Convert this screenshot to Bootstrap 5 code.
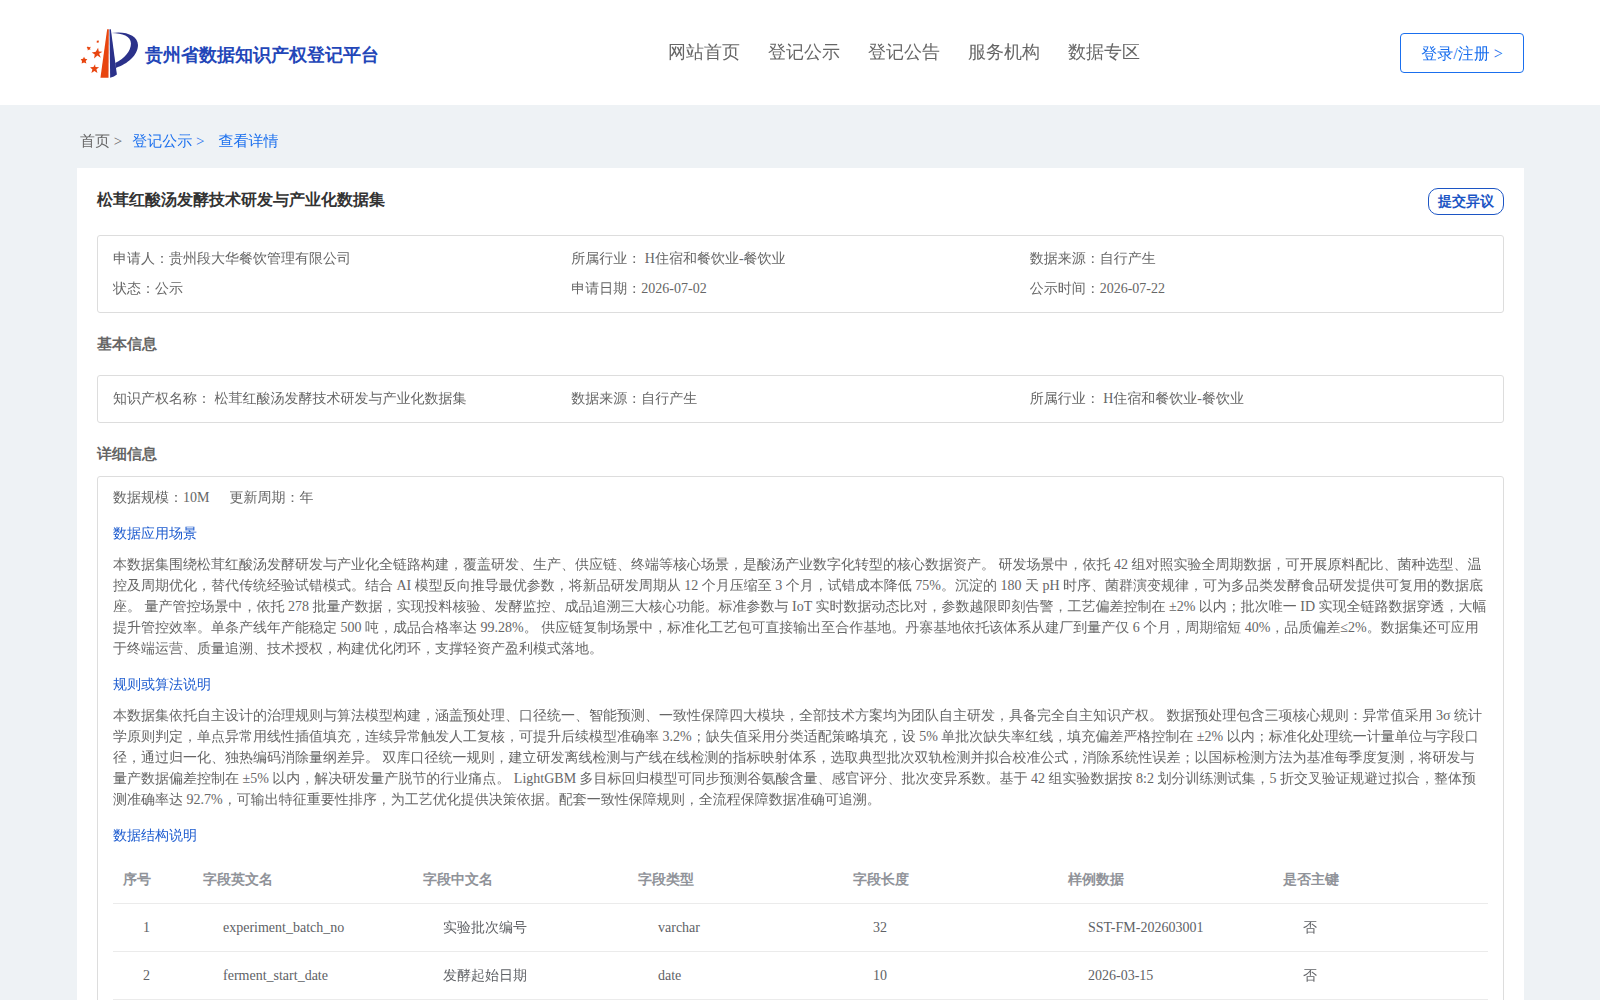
<!DOCTYPE html>
<html lang="en">
<head>
<meta charset="utf-8">
<meta name="viewport" content="width=device-width, initial-scale=1">
<title>贵州省数据知识产权登记平台</title>
<link href="https://cdn.jsdelivr.net/npm/bootstrap@5.3.0/dist/css/bootstrap.min.css" rel="stylesheet">
<style>
  body { font-family: "Liberation Serif", "WenQuanYi Zen Hei", "Noto Sans CJK SC", serif; font-size: 14px; line-height: 21px; color: #666; background: #eef2f5; }
  a { text-decoration: none; }
  .page-pad { padding-left: 77px; padding-right: 76px; }
  .site-header { height: 105px; }
  .brand-name, .sheet-title, .btn-object, .section-title, .field-table th { font-family: "Liberation Serif", serif; font-weight: 700; }
  .brand-name { font-size: 18px; line-height: 26px; color: #2346b8; padding-top: 4px; }
  .brand-link { gap: 6px; padding: 1px 0 0 3px; }
  .main-menu { gap: 28px; font-size: 18px; line-height: 26px; margin-left: 29px; margin-bottom: 2px; }
  .main-menu a { color: #666; }
  .btn-login { height: 40px; padding: 2px 20px 0; min-width: 124px; font-size: 16px; color: #1a6fee; border: 1px solid #1a6fee; border-radius: 4px; }
  .crumbs { height: 63px; padding: 10px 0 0 3px; font-size: 15px; gap: 10px; }
  .crumbs a { color: #1a6fee; }
  .crumbs .crumb-home { color: #666; }
  .crumb-current { color: #1a6fee; padding-left: 4px; }
  .sheet { padding: 20px; }
  .sheet-title { font-size: 16px; line-height: 24px; color: #333; }
  .btn-object { height: 27px; padding: 0 9px; font-size: 14px; line-height: 25px; color: #1c55c4; border: 1px solid #1c55c4; border-radius: 10px; }
  .info-box { border: 1px solid #ddd; border-radius: 3px; padding: 8px 15px; line-height: 30px; }
  .info-box.is-summary { margin-top: 20px; }
  .section-title { font-size: 15px; line-height: 22px; margin: 20px 0; }
  .section-title.is-tight { margin-bottom: 11px; }
  .detail-box { border: 1px solid #ddd; border-radius: 3px; padding: 10px 15px; }
  .sub-title { font-size: 14px; line-height: 21px; font-weight: 400; color: #1c5bcf; margin: 15px 0 10px; }
  .field-table { --bs-table-bg: transparent; table-layout: fixed; color: #606266; margin-top: 10px; }
  .field-table th { padding: 11px 10px 12px; height: 47px; line-height: 23px; color: #909399; border-bottom: 1px solid #ebebeb; }
  .field-table td { padding: 12px 30px; height: 48px; line-height: 23px; color: #606266; border-bottom: 1px solid #ebebeb; }
  .col-index { width: 80px; }
  .col-name { width: 220px; }
</style>
</head>
<body>
<header class="site-header page-pad bg-white d-flex align-items-center justify-content-between">
  <a href="#" class="brand-link d-flex align-items-center">
    <svg width="59" height="51" viewBox="30 38 176 152" aria-hidden="true">
      <path fill="#e8450f" d="M111 42h5l-1 144H91z"/>
      <path fill="#2b318a" d="M118 42h4l18 135q-8 7-20 9z"/>
      <path fill="#2b318a" d="M124 53C165 46 203 60 203 89C203 119 172 146 137 157L135 142C162 129 182 107 182 84C182 63 157 53 124 53Z"/>
      <g fill="#e8450f">
        <path d="M84 97l2 11 11 1-10 6 5 12-10-7-10 9 2-12-9-6 12-2z"/>
        <path d="M75 146l1 8 11 1-8 6 3 11-9-6-9 6 3-10-7-7 10-1z"/>
        <path d="M42 124l3 6 7 1-5 5 2 8-7-3-7 3 1-8-4-5 7-1z"/>
        <path d="M53 93l4 2 5-1-2 5 1 4-4-1-4 3v-5l-3-3z"/>
        <path d="M80 76l6-1v6l-6 1z"/>
      </g>
    </svg>
    <span class="brand-name">贵州省数据知识产权登记平台</span>
  </a>
  <nav class="main-menu d-flex">
    <a href="#">网站首页</a>
    <a href="#">登记公示</a>
    <a href="#">登记公告</a>
    <a href="#">服务机构</a>
    <a href="#">数据专区</a>
  </nav>
  <button type="button" class="btn btn-login">登录/注册 &gt;</button>
</header>

<main class="page-pad">
  <nav class="crumbs d-flex align-items-center" aria-label="breadcrumb">
    <a href="#" class="crumb-home">首页 &gt;</a>
    <a href="#">登记公示 &gt;</a>
    <span class="crumb-current">查看详情</span>
  </nav>

  <div class="sheet bg-white">
    <div class="d-flex justify-content-between align-items-start">
      <h1 class="sheet-title mb-0">松茸红酸汤发酵技术研发与产业化数据集</h1>
      <button type="button" class="btn btn-object">提交异议</button>
    </div>

    <div class="info-box is-summary">
      <div class="row g-0">
        <div class="col-4">申请人：贵州段大华餐饮管理有限公司</div>
        <div class="col-4">所属行业： H住宿和餐饮业-餐饮业</div>
        <div class="col-4">数据来源：自行产生</div>
        <div class="col-4">状态：公示</div>
        <div class="col-4">申请日期：2026-07-02</div>
        <div class="col-4">公示时间：2026-07-22</div>
      </div>
    </div>

    <h2 class="section-title">基本信息</h2>
    <div class="info-box">
      <div class="row g-0">
        <div class="col-4">知识产权名称： 松茸红酸汤发酵技术研发与产业化数据集</div>
        <div class="col-4">数据来源：自行产生</div>
        <div class="col-4">所属行业： H住宿和餐饮业-餐饮业</div>
      </div>
    </div>

    <h2 class="section-title is-tight">详细信息</h2>
    <section class="detail-box">
      <div class="d-flex gap-3"><span class="me-1">数据规模：10M</span><span>更新周期：年</span></div>

      <h3 class="sub-title">数据应用场景</h3>
      <p class="mb-0">本数据集围绕松茸红酸汤发酵研发与产业化全链路构建，覆盖研发、生产、供应链、终端等核心场景，是酸汤产业数字化转型的核心数据资产。 研发场景中，依托 42 组对照实验全周期数据，可开展原料配比、菌种选型、温控及周期优化，替代传统经验试错模式。结合 AI 模型反向推导最优参数，将新品研发周期从 12 个月压缩至 3 个月，试错成本降低 75%。沉淀的 180 天 pH 时序、菌群演变规律，可为多品类发酵食品研发提供可复用的数据底座。 量产管控场景中，依托 278 批量产数据，实现投料核验、发酵监控、成品追溯三大核心功能。标准参数与 IoT 实时数据动态比对，参数越限即刻告警，工艺偏差控制在 ±2% 以内；批次唯一 ID 实现全链路数据穿透，大幅提升管控效率。单条产线年产能稳定 500 吨，成品合格率达 99.28%。 供应链复制场景中，标准化工艺包可直接输出至合作基地。丹寨基地依托该体系从建厂到量产仅 6 个月，周期缩短 40%，品质偏差≤2%。数据集还可应用于终端运营、质量追溯、技术授权，构建优化闭环，支撑轻资产盈利模式落地。</p>

      <h3 class="sub-title">规则或算法说明</h3>
      <p class="mb-0">本数据集依托自主设计的治理规则与算法模型构建，涵盖预处理、口径统一、智能预测、一致性保障四大模块，全部技术方案均为团队自主研发，具备完全自主知识产权。 数据预处理包含三项核心规则：异常值采用 3σ 统计学原则判定，单点异常用线性插值填充，连续异常触发人工复核，可提升后续模型准确率 3.2%；缺失值采用分类适配策略填充，设 5% 单批次缺失率红线，填充偏差严格控制在 ±2% 以内；标准化处理统一计量单位与字段口径，通过归一化、独热编码消除量纲差异。 双库口径统一规则，建立研发离线检测与产线在线检测的指标映射体系，选取典型批次双轨检测并拟合校准公式，消除系统性误差；以国标检测方法为基准每季度复测，将研发与量产数据偏差控制在 ±5% 以内，解决研发量产脱节的行业痛点。 LightGBM 多目标回归模型可同步预测谷氨酸含量、感官评分、批次变异系数。基于 42 组实验数据按 8:2 划分训练测试集，5 折交叉验证规避过拟合，整体预测准确率达 92.7%，可输出特征重要性排序，为工艺优化提供决策依据。配套一致性保障规则，全流程保障数据准确可追溯。</p>

      <h3 class="sub-title">数据结构说明</h3>
      <table class="table field-table mb-0">
        <colgroup><col class="col-index"><col class="col-name"><col><col><col><col><col></colgroup>
        <thead>
          <tr><th scope="col">序号</th><th scope="col">字段英文名</th><th scope="col">字段中文名</th><th scope="col">字段类型</th><th scope="col">字段长度</th><th scope="col">样例数据</th><th scope="col">是否主键</th></tr>
        </thead>
        <tbody>
          <tr><td>1</td><td>experiment_batch_no</td><td>实验批次编号</td><td>varchar</td><td>32</td><td>SST-FM-202603001</td><td>否</td></tr>
          <tr><td>2</td><td>ferment_start_date</td><td>发酵起始日期</td><td>date</td><td>10</td><td>2026-03-15</td><td>否</td></tr>
        </tbody>
      </table>
    </section>
  </div>
</main>
<script src="https://cdn.jsdelivr.net/npm/bootstrap@5.3.0/dist/js/bootstrap.bundle.min.js"></script>
</body>
</html>
